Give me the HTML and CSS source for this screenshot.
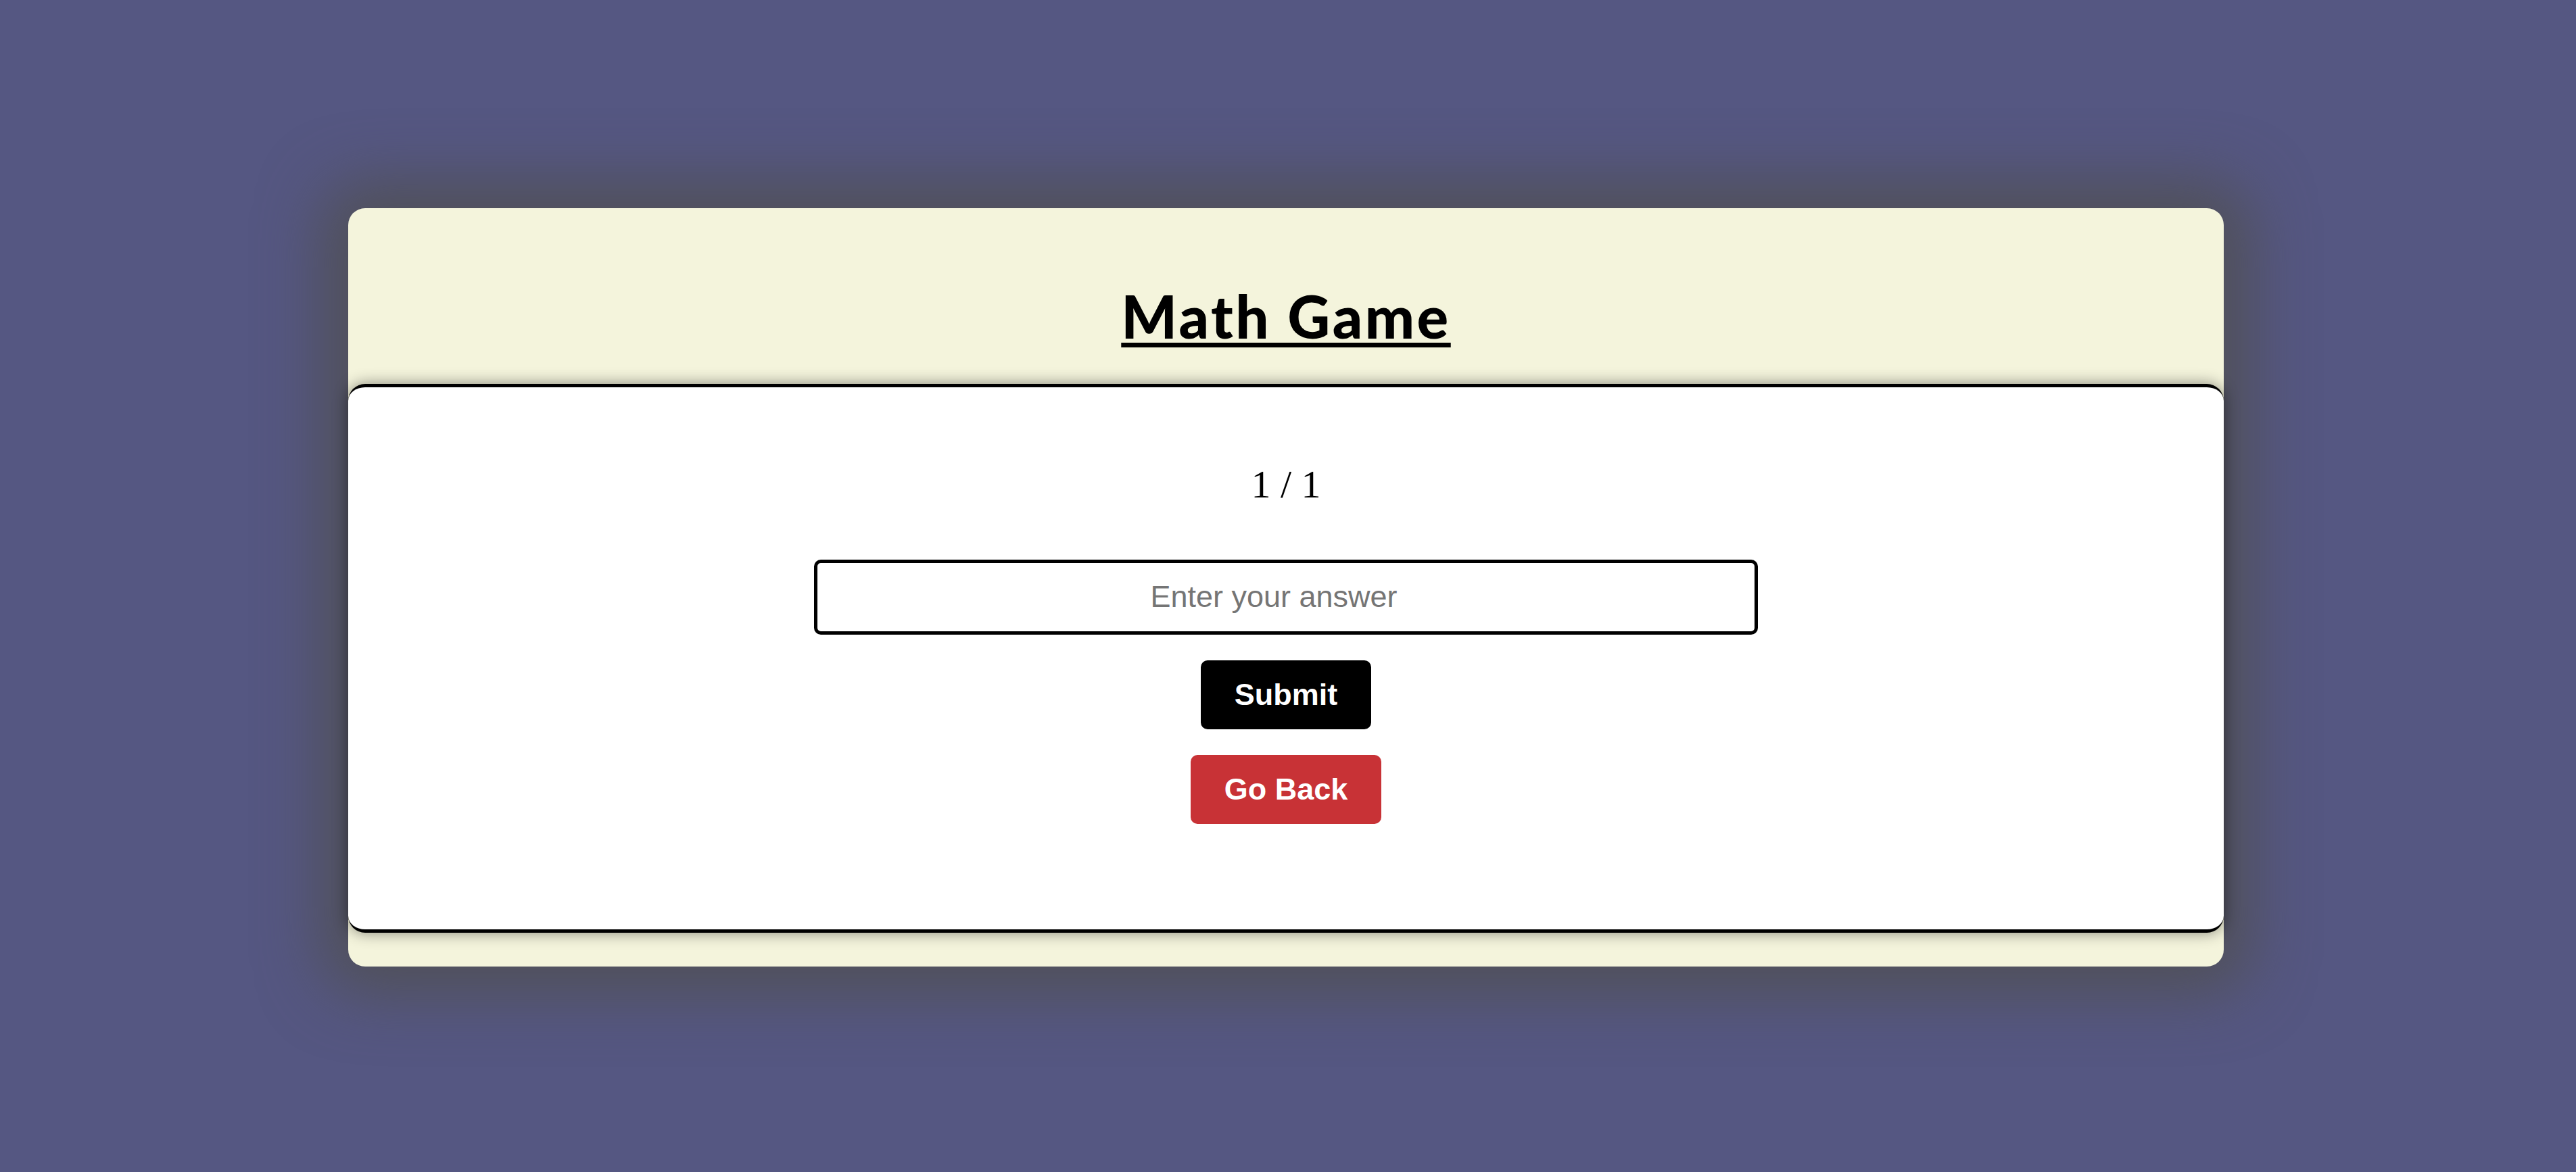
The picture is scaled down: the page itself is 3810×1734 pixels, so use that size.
FILE: index.html
```html
<!DOCTYPE html>
<html lang="en">
<head>
<meta charset="utf-8">
<title>Math Game</title>
<link rel="stylesheet" href="styles.css">
</head>
<body>
  <main class="card">
    <header class="card-header">
      <h1 class="title">Math Game</h1>
    </header>
    <section class="panel">
      <p class="progress">1 / 1</p>
      <input class="answer" type="text" placeholder="Enter your answer">
      <button class="btn btn-submit" type="button">Submit</button>
      <button class="btn btn-back" type="button">Go Back</button>
    </section>
  </main>
</body>
</html>
```

FILE: styles.css
```css
html, body {
  margin: 0;
  padding: 0;
}

body {
  background: #555782;
  height: 100vh;
  box-sizing: border-box;
  padding: 4px 6px 0 0;
  display: flex;
  align-items: center;
  justify-content: center;
  font-family: "Liberation Sans", Arial, sans-serif;
}

.card {
  width: 2774px;
  background: #f4f4dc;
  border-radius: 25px;
  box-shadow: 0 0 90px 40px rgba(80, 80, 86, 0.95);
  display: flex;
  flex-direction: column;
  padding-bottom: 50px;
}

.card-header {
  height: 260px;
  box-sizing: border-box;
  padding-top: 108px;
  text-align: center;
}

.title {
  margin: 0;
  font-family: "Lato", "Open Sans", sans-serif;
  font-weight: 900;
  font-size: 87px;
  line-height: 1.2;
  letter-spacing: 3.5px;
  color: #000;
  text-decoration: underline;
  text-decoration-thickness: 7px;
  text-underline-offset: 6px;
}

.panel {
  background: #fff;
  border-top: 5px solid #000;
  border-bottom: 5px solid #000;
  border-radius: 25px;
  box-shadow: 0 0 22px rgba(0, 0, 0, 0.45);
  display: flex;
  flex-direction: column;
  align-items: center;
  padding: 111px 0 156px;
}

.progress {
  margin: 0 0 77px;
  font-family: "Liberation Serif", "Times New Roman", serif;
  font-size: 58px;
  line-height: 1.15;
  color: #000;
}

.answer {
  box-sizing: border-box;
  width: 1396px;
  height: 111px;
  border: 5px solid #000;
  border-radius: 10px;
  padding: 0 61px 0 25px;
  font-family: "Liberation Sans", Arial, sans-serif;
  font-size: 45px;
  text-align: center;
  color: #000;
  background: #fff;
  outline: none;
  margin: 0 0 38px;
}

.answer::placeholder {
  color: #757575;
}

.btn {
  font-family: "Liberation Sans", Arial, sans-serif;
  font-weight: 700;
  font-size: 45px;
  line-height: 52px;
  padding: 25px 50px;
  border: none;
  border-radius: 10px;
  color: #fff;
  cursor: pointer;
}

.btn-submit {
  background: #000;
  margin-bottom: 38px;
}

.btn-back {
  background: #c83236;
}
```
